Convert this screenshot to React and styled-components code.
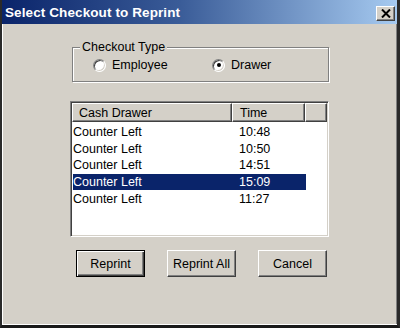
import React from "react";
import styled, { createGlobalStyle } from "styled-components";

const Global = createGlobalStyle`
  html, body { margin: 0; padding: 0; background: #d4d0c8; }
  * { box-sizing: border-box; }
`;

const Window = styled.div`
  width: 400px;
  height: 328px;
  display: flex;
  flex-direction: column;
  background: #d4d0c8;
  border-left: 2px solid #2a2a2a;
  border-right: 3px solid #2a2a2a;
  border-bottom: 3px solid #1a1a1a;
  box-shadow: inset 1px 0 #ffffff, inset 0 -1px #ffffff, inset -1px 0 #808080;
  font-family: "Liberation Sans", Arial, sans-serif;
  font-size: 12.5px;
  color: #000;
`;

const TitleBar = styled.div`
  height: 24px;
  flex: none;
  display: flex;
  align-items: center;
  justify-content: space-between;
  padding: 0 2px 0 3px;
  background: linear-gradient(to right, #0a246a 0%, #3a5c98 45%, #a6caf0 100%);
`;

const Title = styled.span`
  color: #fff;
  font-weight: bold;
  font-size: 13.5px;
  letter-spacing: 0.1px;
  margin-top: 1px;
`;

const CloseButton = styled.div`
  width: 19px;
  height: 15px;
  margin-top: 3px;
  background: #d4d0c8;
  border: 1px solid;
  border-color: #ffffff #404040 #404040 #ffffff;
  box-shadow: inset -1px -1px #808080;
  display: flex;
  align-items: center;
  justify-content: center;
`;

const Body = styled.div`
  flex: 1;
  display: flex;
  flex-direction: column;
  align-items: flex-start;
  padding: 16px 0 0 68px;
`;

const GroupBox = styled.fieldset`
  margin: 0 0 0 2px;
  padding: 4px 0 0 7px;
  width: 257px;
  height: 42px;
  min-width: 0;
  border: 1px solid #808080;
  box-shadow: inset 1px 1px #ffffff, 1px 1px #ffffff;
`;

const Legend = styled.legend`
  padding: 0 2px;
  background: #d4d0c8;
  line-height: 14px;
  font-size: 12.5px;
`;

const Options = styled.div`
  display: flex;
  align-items: center;
  margin-left: 13px;
`;

const Option = styled.label`
  display: flex;
  align-items: center;
  gap: 6px;
  width: ${(p) => p.$width || "auto"};
  height: 14px;
`;

const RadioCircle = styled.span`
  width: 13px;
  height: 13px;
  border-radius: 50%;
  background: #fff;
  border: 1px solid;
  border-color: #808080 #ffffff #ffffff #808080;
  box-shadow: inset 1px 1px #404040, inset -1px -1px #d4d0c8;
  display: flex;
  align-items: center;
  justify-content: center;
  &::after {
    content: "";
    width: 4px;
    height: 4px;
    border-radius: 50%;
    background: ${(p) => (p.$checked ? "#000" : "transparent")};
  }
`;

const ListView = styled.div`
  margin-top: 19px;
  width: 259px;
  height: 136px;
  background: #fff;
  border: 1px solid;
  border-color: #808080 #ffffff #ffffff #808080;
  box-shadow: inset 1px 1px #404040, inset -1px -1px #d4d0c8;
  padding: 1px;
  display: flex;
  flex-direction: column;
`;

const Header = styled.div`
  display: flex;
  height: 19px;
  flex: none;
`;

const HeaderCell = styled.div`
  width: ${(p) => p.$width}px;
  height: 19px;
  background: #d4d0c8;
  border: 1px solid;
  border-color: #ffffff #404040 #404040 #ffffff;
  box-shadow: inset -1px -1px #808080;
  padding-left: ${(p) => p.$pad || 0}px;
  display: flex;
  align-items: center;
  line-height: 14px;
`;

const Rows = styled.div`
  margin-top: 2px;
  display: flex;
  flex-direction: column;
`;

const Row = styled.div`
  display: grid;
  grid-template-columns: 166px 1fr;
  width: 233px;
  margin-left: 1px;
  height: 16.6px;
  align-items: center;
  line-height: 14px;
  background: ${(p) => (p.$selected ? "#0a246a" : "transparent")};
  color: ${(p) => (p.$selected ? "#ffffff" : "#000")};
`;

const ButtonRow = styled.div`
  display: flex;
  gap: 22px;
  margin: 13px 0 0 6px;
`;

const Button = styled.button`
  width: 69px;
  height: 27px;
  font-family: "Liberation Sans", Arial, sans-serif;
  font-size: 12.5px;
  color: #000;
  background: #d4d0c8;
  padding: 0;
  border: 1px solid;
  border-color: ${(p) => (p.$default ? "#000" : "#ffffff #404040 #404040 #ffffff")};
  box-shadow: ${(p) =>
    p.$default
      ? "inset 1px 1px #ffffff, inset -1px -1px #404040, inset -2px -2px #808080"
      : "inset -1px -1px #808080"};
`;

const rows = [
  { name: "Counter Left", time: "10:48" },
  { name: "Counter Left", time: "10:50" },
  { name: "Counter Left", time: "14:51" },
  { name: "Counter Left", time: "15:09", selected: true },
  { name: "Counter Left", time: "11:27" },
];

export default function App() {
  return (
    <>
      <Global />
      <Window>
        <TitleBar>
          <Title>Select Checkout to Reprint</Title>
          <CloseButton>
            <svg width="10" height="9" viewBox="0 0 10 9">
              <path d="M1 0.5 L9 8.5 M9 0.5 L1 8.5" stroke="#000" strokeWidth="2" />
            </svg>
          </CloseButton>
        </TitleBar>
        <Body>
          <GroupBox>
            <Legend>Checkout Type</Legend>
            <Options>
              <Option $width="119px">
                <RadioCircle />
                Employee
              </Option>
              <Option>
                <RadioCircle $checked />
                Drawer
              </Option>
            </Options>
          </GroupBox>
          <ListView>
            <Header>
              <HeaderCell $width={160} $pad={6}>Cash Drawer</HeaderCell>
              <HeaderCell $width={73} $pad={7}>Time</HeaderCell>
              <HeaderCell $width={22} />
            </Header>
            <Rows>
              {rows.map((r, i) => (
                <Row key={i} $selected={r.selected}>
                  <span>{r.name}</span>
                  <span>{r.time}</span>
                </Row>
              ))}
            </Rows>
          </ListView>
          <ButtonRow>
            <Button $default>Reprint</Button>
            <Button>Reprint All</Button>
            <Button>Cancel</Button>
          </ButtonRow>
        </Body>
      </Window>
    </>
  );
}
